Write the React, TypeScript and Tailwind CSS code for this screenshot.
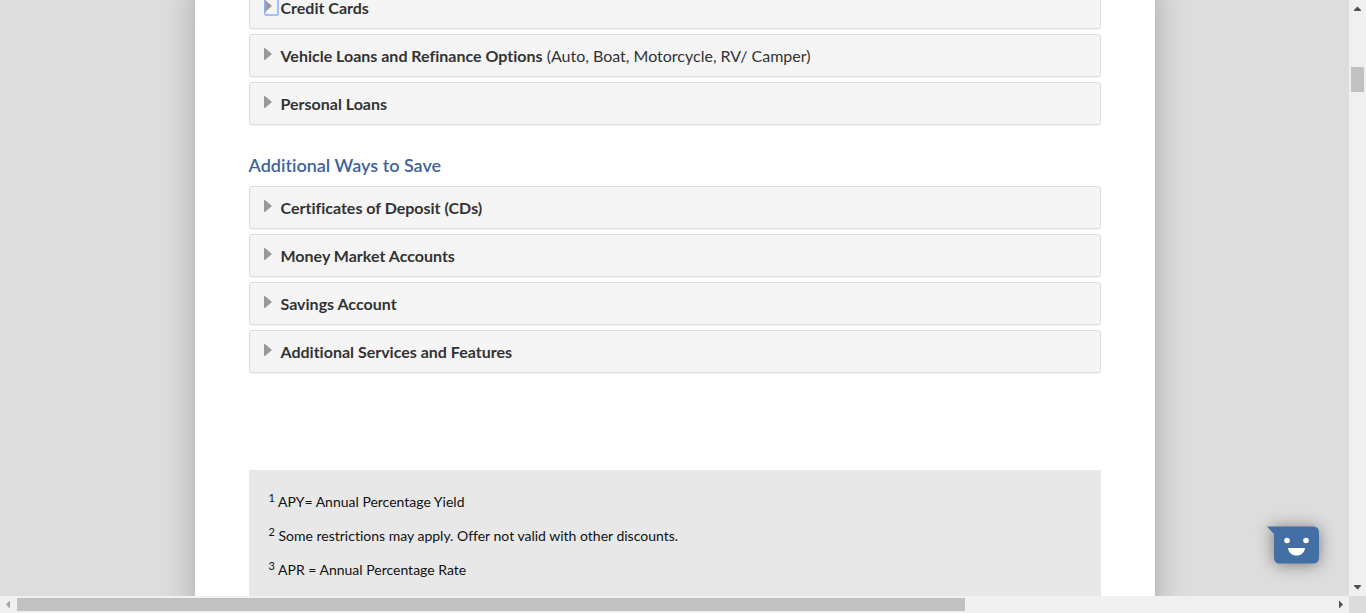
import { useState } from "react";

type Item = { title: string; note?: string; focused?: boolean };

const loans: Item[] = [
  { title: "Credit Cards", focused: true },
  {
    title: "Vehicle Loans and Refinance Options",
    note: "(Auto, Boat, Motorcycle, RV/ Camper)",
  },
  { title: "Personal Loans" },
];

const savings: Item[] = [
  { title: "Certificates of Deposit (CDs)" },
  { title: "Money Market Accounts" },
  { title: "Savings Account" },
  { title: "Additional Services and Features" },
];

const footnotes = [
  "APY= Annual Percentage Yield",
  "Some restrictions may apply. Offer not valid with other discounts.",
  "APR = Annual Percentage Rate",
];

function Panel({ title, note, focused }: Item) {
  const [open, setOpen] = useState(false);
  return (
    <button
      type="button"
      aria-expanded={open}
      onClick={() => setOpen(!open)}
      className="flex w-full items-start gap-0.5 rounded-[3px] border border-[#dddddd] bg-[#f5f5f5] pt-2.5 pb-[9px] pl-3.5 text-left text-base leading-[22px] text-[#333333] shadow-[0_1px_1px_rgba(0,0,0,0.05)]"
    >
      <span
        className={
          focused
            ? "h-[19px] w-[15px] shrink-0 rounded-[2px] pt-[3px] outline-2 -outline-offset-2 outline-[#8ab4fb]/80"
            : "h-[19px] w-[15px] shrink-0 pt-[3px]"
        }
      >
        <svg className="h-3 w-2" viewBox="0 0 8 12" aria-hidden="true">
          <path d="M0 0H1L8 6L1 12H0Z" fill="#999999" />
        </svg>
      </span>
      <span>
        <span className="font-bold">{title}</span>
        {note && <span> {note}</span>}
      </span>
    </button>
  );
}

function ChatButton() {
  return (
    <button
      type="button"
      aria-label="Open chat"
      className="absolute right-[29px] bottom-8 drop-shadow-[0_1px_8px_rgba(0,0,0,0.45)]"
    >
      <svg className="h-[38px] w-[53px]" viewBox="0 0 53 38" aria-hidden="true">
        <path
          d="M0 0.500H46Q52 0.500 52 6.500V31.500Q52 37.500 46 37.500H13Q7 37.500 7 31.500V8Z"
          fill="#446fa4"
        />
        <circle cx="20" cy="14.5" r="2.8" fill="#ffffff" />
        <circle cx="39" cy="14.5" r="2.8" fill="#ffffff" />
        <path
          d="M21.5 22H37.5Q38.2 22 38 23C36.5 27.5 33.500 29.500 29.500 29.500C25.500 29.500 22.500 27.500 21 23Q20.800 22 21.500 22Z"
          fill="#ffffff"
        />
      </svg>
    </button>
  );
}

function VerticalScrollbar() {
  return (
    <div className="flex w-[17px] shrink-0 flex-col items-center bg-[#f0f0f0]">
      <svg className="h-[17px] w-[17px] shrink-0" viewBox="0 0 17 17" aria-hidden="true">
        <path d="M5 11V10L8.500 6.500L12 10V11Z" fill="#505050" />
      </svg>
      <div className="mt-[50px] h-[25px] w-[13px] bg-[#c1c1c1]" />
      <svg className="mt-auto h-[17px] w-[17px] shrink-0" viewBox="0 0 17 17" aria-hidden="true">
        <path d="M5 6V7L8.500 10.500L12 7V6Z" fill="#505050" />
      </svg>
    </div>
  );
}

function HorizontalScrollbar() {
  return (
    <div className="flex h-[17px] shrink-0 bg-[#f0f0f0]">
      <svg className="h-[17px] w-[17px] shrink-0" viewBox="0 0 17 17" aria-hidden="true">
        <path d="M10 5V12H9.500L6 8.500L9.500 5Z" fill="#a3a3a3" />
      </svg>
      <div className="flex flex-1 items-center">
        <div className="h-[13px] w-[72.1%] bg-[#c1c1c1]" />
      </div>
      <svg className="h-[17px] w-[17px] shrink-0" viewBox="0 0 17 17" aria-hidden="true">
        <path d="M7 5V12H7.500L11 8.500L7.500 5Z" fill="#505050" />
      </svg>
      <div className="w-[17px] shrink-0 bg-[#dcdcdc]" />
    </div>
  );
}

export default function App() {
  return (
    <div className="flex h-screen flex-col font-['Lato',sans-serif] [font-variant-ligatures:none]">
      <div className="flex min-h-0 flex-1">
        <div className="relative min-w-0 flex-1 overflow-hidden bg-[#dddddd]">
          <main className="mx-auto -mt-3.5 min-h-full max-w-[960px] bg-white px-[54px] shadow-[0_0_30px_rgba(0,0,0,0.25)]">
            <section className="flex flex-col gap-[5px]">
              {loans.map((item) => (
                <Panel key={item.title} {...item} />
              ))}
            </section>
            <h2 className="mt-7 mb-2 text-lg leading-[25px] font-semibold text-[#41639d]">
              Additional Ways to Save
            </h2>
            <section className="flex flex-col gap-[5px]">
              {savings.map((item) => (
                <Panel key={item.title} {...item} />
              ))}
            </section>
            <footer className="mt-[97px] flex flex-col gap-3.5 bg-[#e8e8e8] px-5 pt-[22px] pb-10 text-sm leading-5 text-[#111111]">
              {footnotes.map((text, i) => (
                <p key={text}>
                  <sup className="text-[11px]">{i + 1}</sup> {text}
                </p>
              ))}
            </footer>
          </main>
          <ChatButton />
        </div>
        <VerticalScrollbar />
      </div>
      <HorizontalScrollbar />
    </div>
  );
}
